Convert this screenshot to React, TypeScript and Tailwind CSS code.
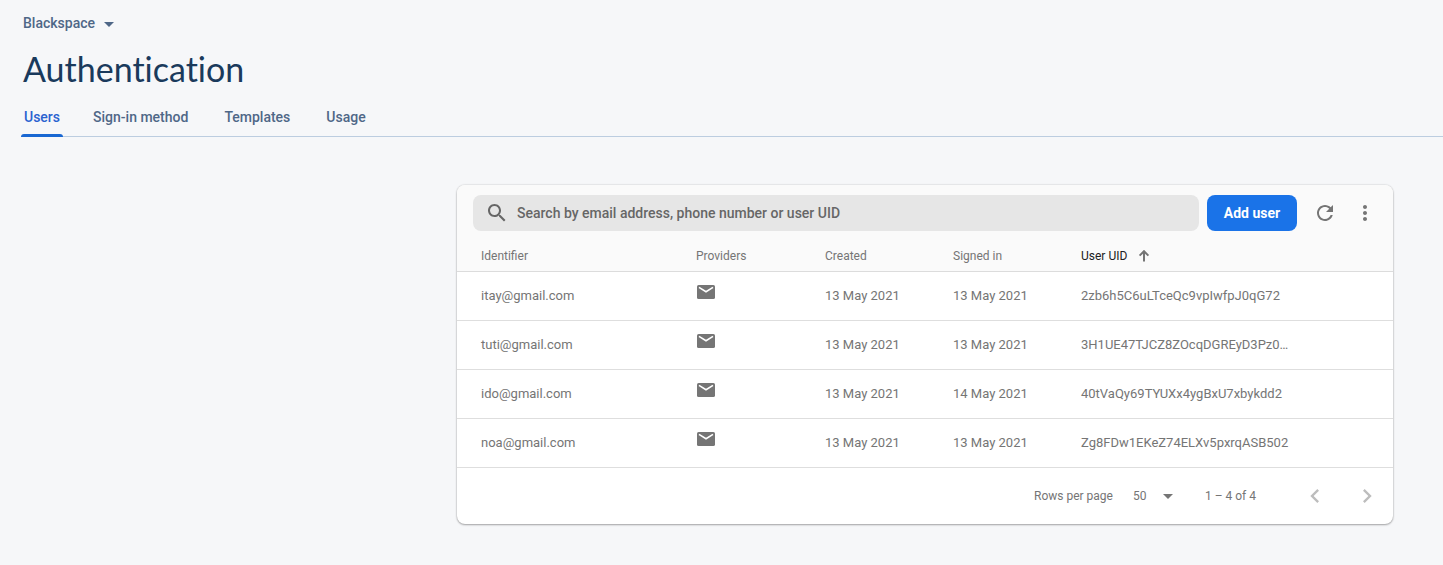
import React from "react";

type User = { email: string; created: string; signedIn: string; uid: string };

const users: User[] = [
  { email: "itay@gmail.com", created: "13 May 2021", signedIn: "13 May 2021", uid: "2zb6h5C6uLTceQc9vpIwfpJ0qG72" },
  { email: "tuti@gmail.com", created: "13 May 2021", signedIn: "13 May 2021", uid: "3H1UE47TJCZ8ZOcqDGREyD3Pz0…" },
  { email: "ido@gmail.com", created: "13 May 2021", signedIn: "14 May 2021", uid: "40tVaQy69TYUXx4ygBxU7xbykdd2" },
  { email: "noa@gmail.com", created: "13 May 2021", signedIn: "13 May 2021", uid: "Zg8FDw1EKeZ74ELXv5pxrqASB502" },
];

const tabs = ["Users", "Sign-in method", "Templates", "Usage"];

function Icon({ d, className }: { d: string; className: string }) {
  return (
    <svg viewBox="0 0 24 24" fill="currentColor" aria-hidden="true" className={className}>
      <path d={d} />
    </svg>
  );
}

function Caret({ className }: { className: string }) {
  return (
    <svg viewBox="0 0 10 5" fill="currentColor" aria-hidden="true" className={className}>
      <path d="M0 0h10L5 5z" />
    </svg>
  );
}

function MailIcon() {
  return (
    <svg viewBox="0 0 18 14" role="img" aria-label="Email" className="mb-2 block h-3.5 w-[18px] text-[#757575]">
      <rect width="18" height="14" rx="1.6" fill="currentColor" />
      <path d="M2 2.4l7 4.4 7-4.4" fill="none" stroke="#fff" strokeWidth="1.6" />
    </svg>
  );
}

export default function App() {
  return (
    <div className="min-h-screen bg-[#f6f7f9] pb-10 font-['Roboto',sans-serif]">
      <header>
        <div className="px-[23px] pt-[11px]">
          <button className="flex h-6 items-center gap-[9px] text-sm font-medium text-[#4f6787]">
            Blackspace
            <Caret className="mt-0.5 h-[5px] w-2.5" />
          </button>
          <h1 className="mt-3 font-['Lato',sans-serif] text-[34px] leading-[44px] text-[#1a3a5c] [font-variant-ligatures:none]">
            Authentication
          </h1>
        </div>
        <nav className="mt-2 ml-[21px] flex gap-6 border-b border-[#bccde0]">
          {tabs.map((tab, i) => (
            <a
              key={tab}
              href="#"
              aria-current={i === 0 ? "page" : undefined}
              className={
                i === 0
                  ? "relative px-[3px] pt-2 pb-2 text-sm leading-[21px] font-medium text-[#2a62d0]"
                  : "px-1.5 pt-2 pb-2 text-sm leading-[21px] font-medium text-[#4f6787]"
              }
            >
              {tab}
              {i === 0 && <span className="absolute inset-x-0 -bottom-px h-[3px] rounded-t-[3px] bg-[#1967d2]" />}
            </a>
          ))}
        </nav>
      </header>

      <main className="mt-12 flex justify-end px-[50px]">
        <section className="w-full max-w-[936px] overflow-hidden rounded-lg bg-white shadow-[0_1px_2px_rgba(0,0,0,0.3),0_0_2px_rgba(0,0,0,0.2)]">
          <div className="flex items-center gap-2 bg-[#fafafa] py-2.5 pr-2 pl-4">
            <label className="flex h-9 flex-1 items-center gap-2 rounded-lg bg-[#e6e6e6] pl-3 text-[#666666]">
              <Icon
                className="size-6"
                d="M15.5 14h-.79l-.28-.27C15.41 12.59 16 11.11 16 9.5 16 5.91 13.09 3 9.5 3S3 5.91 3 9.5 5.91 16 9.5 16c1.61 0 3.09-.59 4.23-1.57l.27.28v.79l5 4.99L20.49 19l-4.99-5zm-6 0C7.01 14 5 11.99 5 9.5S7.01 5 9.5 5 14 7.01 14 9.5 11.99 14 9.5 14z"
              />
              <input
                type="text"
                aria-label="Search users"
                placeholder="Search by email address, phone number or user UID"
                className="h-full min-w-0 flex-1 bg-transparent text-sm font-medium outline-none placeholder:text-[#666666]"
              />
            </label>
            <button className="h-9 min-w-[90px] rounded-lg bg-[#1a73e8] px-4 text-sm font-bold text-white">
              Add user
            </button>
            <div className="flex text-[#757575]">
              <button aria-label="Refresh" className="flex h-9 w-10 items-center justify-center">
                <Icon
                  className="size-6"
                  d="M17.65 6.35C16.2 4.9 14.21 4 12 4c-4.42 0-7.99 3.58-7.99 8s3.57 8 7.99 8c3.73 0 6.84-2.55 7.73-6h-2.08c-.82 2.33-3.04 4-5.65 4-3.31 0-6-2.69-6-6s2.69-6 6-6c1.66 0 3.14.69 4.22 1.78L13 11h7V4l-2.35 2.35z"
                />
              </button>
              <button aria-label="More options" className="flex h-9 w-10 items-center justify-center">
                <Icon
                  className="size-6"
                  d="M12 8c1.1 0 2-.9 2-2s-.9-2-2-2-2 .9-2 2 .9 2 2 2zm0 2c-1.1 0-2 .9-2 2s.9 2 2 2 2-.9 2-2-.9-2-2-2zm0 6c-1.1 0-2 .9-2 2s.9 2 2 2 2-.9 2-2-.9-2-2-2z"
                />
              </button>
            </div>
          </div>

          <table className="w-full table-fixed border-separate border-spacing-0 text-left">
            <colgroup>
              <col className="w-[239px]" />
              <col className="w-[129px]" />
              <col className="w-32" />
              <col className="w-32" />
              <col />
            </colgroup>
            <thead className="bg-[#fafafa] text-xs text-[#757575]">
              <tr className="h-[31px]">
                <th className="border-b border-[#dcdcdc] pl-6 font-normal">Identifier</th>
                <th className="border-b border-[#dcdcdc] font-normal">Providers</th>
                <th className="border-b border-[#dcdcdc] font-normal">Created</th>
                <th className="border-b border-[#dcdcdc] font-normal">Signed in</th>
                <th className="border-b border-[#dcdcdc] font-normal text-[#212121]" aria-sort="ascending">
                  <button className="flex items-center gap-[9px]">
                    User UID
                    <svg viewBox="0 0 16 16" aria-hidden="true" className="size-4 text-[#757575]">
                      <path d="M8 13.5V4M3.6 7.6L8 3.2l4.4 4.4" fill="none" stroke="currentColor" strokeWidth="2" />
                    </svg>
                  </button>
                </th>
              </tr>
            </thead>
            <tbody className="text-[13px] text-[#757575]">
              {users.map((user) => (
                <tr key={user.email} className="h-[49px]">
                  <td className="border-b border-[#dedede] pl-6">{user.email}</td>
                  <td className="border-b border-[#dedede] pl-px">
                    <MailIcon />
                  </td>
                  <td className="border-b border-[#dedede]">{user.created}</td>
                  <td className="border-b border-[#dedede]">{user.signedIn}</td>
                  <td className="border-b border-[#dedede]">{user.uid}</td>
                </tr>
              ))}
            </tbody>
          </table>

          <footer className="flex h-14 items-center justify-end pr-1.5 text-xs text-[#757575]">
            <label htmlFor="page-size">Rows per page</label>
            <div className="relative ml-5 flex items-center">
              <select id="page-size" defaultValue="50" className="w-10 appearance-none bg-transparent text-xs">
                <option>50</option>
                <option>100</option>
                <option>250</option>
              </select>
              <Caret className="pointer-events-none absolute right-0 h-[5px] w-2.5" />
            </div>
            <span className="ml-8">1 – 4 of 4</span>
            <div className="ml-[39px] flex gap-3 text-[#bdbdbd]">
              <button aria-label="Previous page" className="flex size-10 items-center justify-center">
                <Icon className="size-7" d="M15.41 7.41L14 6l-6 6 6 6 1.41-1.41L10.83 12z" />
              </button>
              <button aria-label="Next page" className="flex size-10 items-center justify-center">
                <Icon className="size-7" d="M10 6L8.59 7.41 13.17 12l-4.58 4.59L10 18l6-6z" />
              </button>
            </div>
          </footer>
        </section>
      </main>
    </div>
  );
}
